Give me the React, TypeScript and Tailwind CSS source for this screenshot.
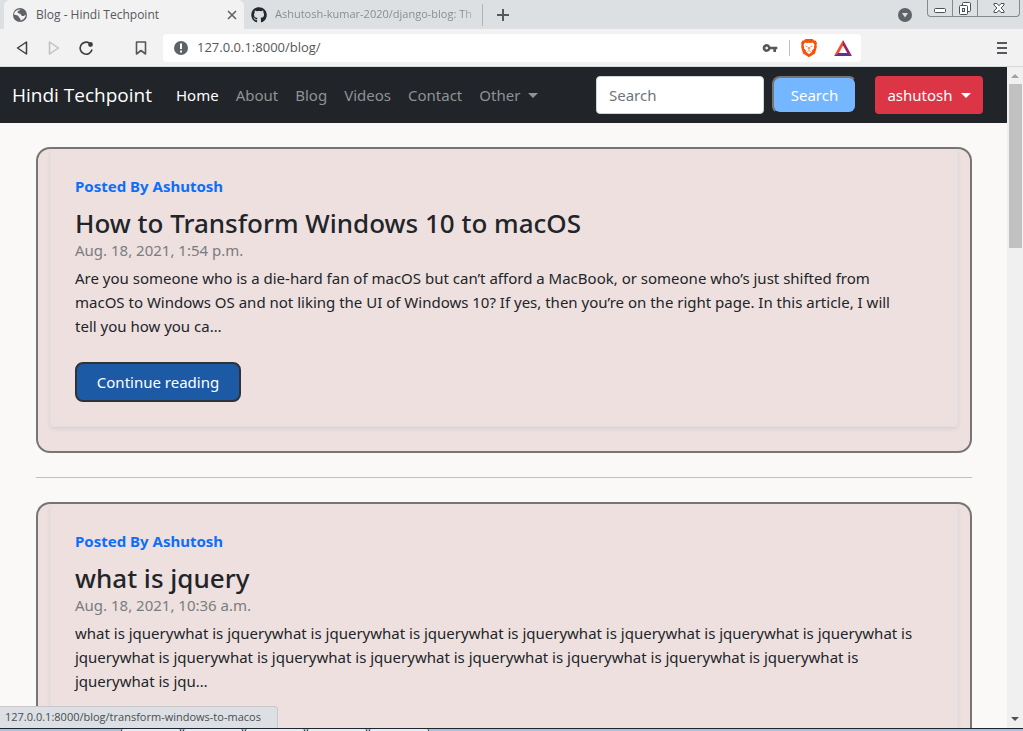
import React from "react";
import { FaGithub } from "react-icons/fa";
import { MdVpnKey } from "react-icons/md";

type Post = { author: string; title: string; date: string; body: string };

const posts: Post[] = [
  {
    author: "Ashutosh",
    title: "How to Transform Windows 10 to macOS",
    date: "Aug. 18, 2021, 1:54 p.m.",
    body: "Are you someone who is a die-hard fan of macOS but can’t afford a MacBook, or someone who’s just shifted from macOS to Windows OS and not liking the UI of Windows 10? If yes, then you’re on the right page. In this article, I will\ntell you how you ca…",
  },
  {
    author: "Ashutosh",
    title: "what is jquery",
    date: "Aug. 18, 2021, 10:36 a.m.",
    body: "what is jquery".repeat(17) + "what is jqu…",
  },
];

function WindowControls() {
  return (
    <div className="flex h-[17px] rounded-b-[4px] border border-t-0 border-[#85898d] text-[#4d5053]">
      <button aria-label="Minimize" className="flex w-[25px] items-center justify-center border-r border-[#85898d]">
        <svg width="14" height="16" viewBox="0 0 14 16" fill="none" stroke="currentColor">
          <rect x="1.5" y="8.5" width="11" height="4" rx="1" fill="#fff" />
        </svg>
      </button>
      <button aria-label="Restore" className="flex w-[25px] items-center justify-center border-r border-[#85898d]">
        <svg width="14" height="16" viewBox="0 0 14 16" stroke="currentColor">
          <rect x="4.5" y="2.5" width="8" height="9" rx="1" fill="#fff" />
          <rect x="1.5" y="5.5" width="8" height="9" rx="1" fill="#fff" />
          <rect x="4.5" y="8.5" width="2" height="3" fill="#dee1e6" />
        </svg>
      </button>
      <button aria-label="Close window" className="flex w-[41px] items-center justify-center">
        <svg width="14" height="16" viewBox="0 0 14 16" fill="#fff" stroke="currentColor">
          <path d="M2 3.500h3l2 2.300 2-2.300h3v1.500L9 8l3 3v1.500H9l-2-2.300-2 2.300H2V11l3-3-3-3z" />
        </svg>
      </button>
    </div>
  );
}

function TabStrip() {
  return (
    <div className="flex h-[29px] shrink-0 items-start bg-[#dce0e3] text-xs">
      <div className="ml-1 flex h-full w-[240px] items-center rounded-t-md bg-[#f2f2f2] pr-1.5 pl-2 text-[#55585c]">
        <svg width="16" height="16" viewBox="0 0 16 16">
          <circle cx="8" cy="8" r="7" fill="#5f6368" />
          <path d="M8.500 2.500c-1 1.200-3 1-3 2.600 0 1.400 1.500 1.200 2.500 1.600 1.200.5 1 1.800 2.200 2.200 1.500.4 2.800-.4 3.600-1.400-.1 3-2.500 5.600-5.600 6 .5-1 .5-1.800-.4-2.300-1-.5-.8-1.800-2-2.600C4.800 7.900 3 8 2 7.500 2.300 4.500 5 2 8.500 2.500z" fill="#f2f2f2" />
        </svg>
        <span className="ml-2 flex-1 whitespace-nowrap">Blog - Hindi Techpoint</span>
        <button aria-label="Close tab">
          <svg width="12" height="12" viewBox="0 0 12 12" stroke="#5f6368" strokeWidth="1.600">
            <path d="M2 2l8 8M10 2l-8 8" />
          </svg>
        </button>
      </div>
      <div className="flex h-full w-[239px] items-center pl-[7px] text-[#8a8d91]">
        <FaGithub className="size-4 shrink-0 text-[#24292e]" />
        <span className="ml-2 flex-1 bg-linear-to-r from-[#85888c] from-90% to-[#dce0e3] bg-clip-text text-[11px] whitespace-nowrap text-transparent">
          Ashutosh-kumar-2020/django-blog: Th
        </span>
        <span className="h-[22px] w-px bg-[#b0b4b8]" />
      </div>
      <button aria-label="New tab" className="ml-3.5 flex h-full items-center">
        <svg width="12" height="12" viewBox="0 0 12 12" stroke="#55585c" strokeWidth="2">
          <path d="M6 0v12M0 6h12" />
        </svg>
      </button>
      <button aria-label="Search tabs" className="mr-[15px] ml-auto flex h-full items-center">
        <svg width="14" height="14" viewBox="0 0 14 14">
          <circle cx="7" cy="7" r="7" fill="#5f6368" />
          <path d="M4 5h6L7 9.500z" fill="#dce0e3" />
        </svg>
      </button>
      <div className="mr-[3px]">
        <WindowControls />
      </div>
    </div>
  );
}

function AddressBar() {
  return (
    <div className="flex h-[38px] shrink-0 items-center border-b border-[#d5d8da] bg-[#f2f2f2] pr-4 pl-4">
      <button aria-label="Back">
        <svg width="14" height="16" viewBox="0 0 14 16" fill="none" stroke="#3c3f42" strokeWidth="1.500" strokeLinejoin="round">
          <path d="M10.500 2v12L1.500 8z" />
        </svg>
      </button>
      <button aria-label="Forward" className="ml-[18px]">
        <svg width="14" height="16" viewBox="0 0 14 16" fill="none" stroke="#bdbfc1" strokeWidth="1.500" strokeLinejoin="round">
          <path d="M1.500 2v12l9-6z" />
        </svg>
      </button>
      <button aria-label="Reload" className="ml-4">
        <svg width="16" height="16" viewBox="0 0 16 16" fill="none" stroke="#3c3f42" strokeWidth="1.600">
          <path d="M11.500 3.200A6 6 0 1 0 14 9.500" />
          <circle cx="12.500" cy="4.500" r="1.600" fill="#3c3f42" />
        </svg>
      </button>
      <button aria-label="Bookmark" className="ml-10">
        <svg width="14" height="16" viewBox="0 0 14 16" fill="none" stroke="#55585c" strokeWidth="1.600" strokeLinejoin="round">
          <path d="M2.500 2h9v12L7 10.500 2.500 14z" />
        </svg>
      </button>
      <div className="ml-[15px] flex h-7 flex-1 items-center rounded bg-white pr-[9px] pl-2.5">
        <svg width="16" height="16" viewBox="0 0 16 16" className="shrink-0">
          <circle cx="8" cy="8" r="7" fill="#5f6368" />
          <path d="M8 3.500v5.500M8 10.500v2" stroke="#fff" strokeWidth="2" />
        </svg>
        <input
          aria-label="Address"
          defaultValue="127.0.0.1:8000/blog/"
          className="ml-2 min-w-0 flex-1 bg-transparent text-[13px] text-[#55585c] outline-none"
        />
        <MdVpnKey className="size-4 text-[#55585c]" />
        <span className="mr-2.5 ml-[11px] h-4 w-px bg-[#c0c2c4]" />
        <button aria-label="Brave Shields">
          <svg width="18" height="20" viewBox="0 0 18 20">
            <path d="M5.500 1h7L14 2.500h1.500L17 5l-.5 1.500.3 2.500-1.800 6.500L9 19.200 3 15.500 1.200 9l.3-2.500L1 5l1.500-2.500H4z" fill="#fb5009" />
            <path d="M5 4.500l2.500.5L9 4.700l1.500.3 2.500-.5 1.500 2.500-.6 2 .2 1.500-1.800 1.500-.5 2L9 16l-2.800-2-.5-2-1.800-1.500.2-1.500-.6-2z" fill="#fff" />
            <path d="M5.500 8l2 .7M12.500 8l-2 .7M8.500 9l-.3 2 .8.500.8-.5-.3-2M7.300 13.500l1.700-.8 1.700.8" stroke="#fb5009" strokeWidth=".7" fill="none" />
          </svg>
        </button>
        <button aria-label="Brave Rewards" className="ml-4">
          <svg width="18" height="16" viewBox="0 0 18 16">
            <path d="M9 0L0 16l4.500-2.500L9 5.500z" fill="#ff4724" />
            <path d="M9 0v5.500l4.500 8L18 16z" fill="#9e1f63" />
            <path d="M0 16h18l-4.500-3h-9z" fill="#662d91" />
          </svg>
        </button>
      </div>
      <button aria-label="Menu" className="ml-[136px]">
        <svg width="10" height="12" viewBox="0 0 10 12" stroke="#55585c" strokeWidth="2">
          <path d="M0 1h10M0 6h10M0 11h10" />
        </svg>
      </button>
    </div>
  );
}

function Caret() {
  return <span className="border-x-[5px] border-t-[5px] border-x-transparent border-t-current" />;
}

function NavBar() {
  const links = ["About", "Blog", "Videos", "Contact"];
  return (
    <nav className="flex h-14 items-center bg-[#212529] pr-6 pl-3 text-[15px] text-[#909294]">
      <a href="#home" className="mr-6 font-['Open_Sans',sans-serif] text-[19px] whitespace-nowrap text-white">Hindi Techpoint</a>
      <div className="flex items-center gap-[17px]">
        <a href="#home" className="text-white">Home</a>
        {links.map((l) => (
          <a key={l} href={"#" + l.toLowerCase()}>{l}</a>
        ))}
        <button className="flex items-center gap-2">Other <Caret /></button>
      </div>
      <form className="ml-auto flex items-center gap-2" onSubmit={(e) => e.preventDefault()}>
        <input
          type="search"
          aria-label="Search"
          placeholder="Search"
          className="h-[38px] w-[168px] rounded border border-[#ced4da] bg-white px-3 text-[#212529] placeholder:text-[#6c757d]"
        />
        <button className="h-[38px] w-[85px] rounded-lg border-2 border-t-[#767676] border-r-[#212529] border-b-[#212529] border-l-[#767676] bg-[#74b6ff] text-white">
          Search
        </button>
      </form>
      <button className="ml-[18px] flex h-[38px] w-[108px] items-center justify-center gap-2 rounded bg-[#dc3545] text-white">
        ashutosh <Caret />
      </button>
    </nav>
  );
}

function PostCard({ post }: { post: Post }) {
  return (
    <article className="rounded-[14px] border-2 border-[#767676] bg-[#ede0df] px-3 pb-6">
      <div className="rounded border border-t-0 border-[#dfdfe5] px-6 pt-[25px] pb-6 shadow-[0_2px_4px_rgba(0,0,0,0.075)]">
        <p className="text-[15px] leading-6 font-bold text-[#0d6efd]">Posted By {post.author}</p>
        <h3 className="mt-2.5 text-[26px] leading-[30px] font-medium text-[#212529]">{post.title}</h3>
        <p className="text-[15px] leading-6 text-[#7a7c80]">{post.date}</p>
        <p className="mt-1 pr-4 text-[15px] leading-6 whitespace-pre-line text-[#212529]">{post.body}</p>
        <a
          href="#post"
          className="mt-6 inline-flex h-10 w-[166px] items-center justify-center rounded-lg border-2 border-[#2f3236] bg-[#1c5aa6] text-[15px] text-white"
        >
          Continue reading
        </a>
      </div>
    </article>
  );
}

function Scrollbar() {
  return (
    <div className="flex w-4 shrink-0 flex-col items-center bg-[#f0f0f0]">
      <span className="mt-[7px] border-x-4 border-b-4 border-x-transparent border-b-[#a0a0a0]" />
      <span className="mt-1.5 h-[164px] w-[13px] bg-[#c1c1c1]" />
      <span className="mt-auto mb-[7px] border-x-4 border-t-4 border-x-transparent border-t-[#505050]" />
    </div>
  );
}

function Taskbar() {
  return (
    <div className="flex h-[3px] shrink-0 border-t border-[#20262c] bg-[#a9c1de]">
      <span className="w-[121px]" />
      {[0, 1, 2, 3, 4].map((i) => (
        <span key={i} className="mr-0.5 w-[60px] rounded-t-sm border-x border-[#20262c] bg-[#e6edf6]" />
      ))}
    </div>
  );
}

export default function App() {
  return (
    <div className="flex h-screen flex-col overflow-hidden font-['Open_Sans','Noto_Sans',sans-serif]">
      <TabStrip />
      <AddressBar />
      <div className="relative flex min-h-0 flex-1">
        <div className="min-w-0 flex-1 overflow-hidden bg-[#faf9f7] font-['Noto_Sans','Open_Sans',sans-serif]">
          <NavBar />
          <main className="pt-6 pr-[35px] pl-9">
            <PostCard post={posts[0]} />
            <hr className="my-6 border-[#bfbfbd]" />
            <PostCard post={posts[1]} />
          </main>
        </div>
        <Scrollbar />
        <div className="absolute bottom-0 left-0 flex h-[22px] items-center rounded-tr border-t border-r border-[#c8c8cc] bg-[#dce0e5] pr-4 pl-[5px] text-[11px] text-[#4a4d50]">
          127.0.0.1:8000/blog/transform-windows-to-macos
        </div>
      </div>
      <Taskbar />
    </div>
  );
}
